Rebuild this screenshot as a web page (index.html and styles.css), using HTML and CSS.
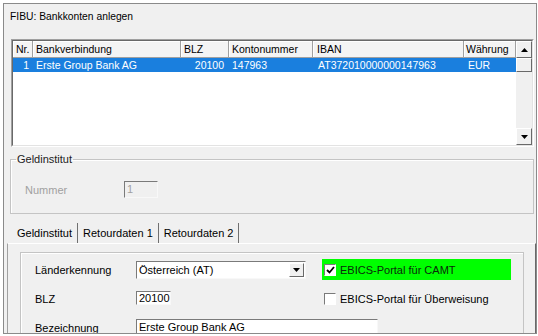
FILE: index.html
```html
<!DOCTYPE html>
<html lang="de">
<head>
    <meta charset="UTF-8">
    <meta name="viewport" content="width=device-width, initial-scale=1.0">
    <title>FIBU: Bankkonten anlegen</title>
    <link rel="stylesheet" href="styles.css">
</head>
<body>
    <div class="window">
        <div class="title">FIBU: Bankkonten anlegen</div>

        <!-- Kontenliste -->
        <div class="listview">
            <div class="list-inner">
                <div class="list-body">
                    <div class="list-row list-head">
                        <span class="col c-nr">Nr.</span>
                        <span class="col c-bank">Bankverbindung</span>
                        <span class="col c-blz">BLZ</span>
                        <span class="col c-konto">Kontonummer</span>
                        <span class="col c-iban">IBAN</span>
                        <span class="col c-wae">Währung</span>
                    </div>
                    <div class="list-row list-item selected">
                        <span class="col c-nr right">1</span>
                        <span class="col c-bank">Erste Group Bank AG</span>
                        <span class="col c-blz right">20100</span>
                        <span class="col c-konto">147963</span>
                        <span class="col c-iban">AT372010000000147963</span>
                        <span class="col c-wae">EUR</span>
                    </div>
                </div>
                <div class="scrollbar">
                    <div class="sb-btn">
                        <svg width="7" height="4" viewBox="0 0 7 4"><polygon points="0,4 7,4 3.5,0" fill="#000"/></svg>
                    </div>
                    <div class="sb-thumb"></div>
                    <div class="sb-track"></div>
                    <div class="sb-btn">
                        <svg width="7" height="4" viewBox="0 0 7 4"><polygon points="0,0 7,0 3.5,4" fill="#000"/></svg>
                    </div>
                </div>
            </div>
        </div>

        <!-- Geldinstitut -->
        <fieldset class="group">
            <legend>Geldinstitut</legend>
            <div class="group-row">
                <span class="group-label disabled">Nummer</span>
                <span class="textbox nr-box disabled">1</span>
            </div>
        </fieldset>

        <!-- Registerkarten -->
        <div class="tabs">
            <div class="tab-strip">
                <span class="tab active">Geldinstitut</span>
                <span class="tab">Retourdaten 1</span>
                <span class="tab">Retourdaten 2</span>
            </div>
            <div class="tab-page">
                <div class="panel">
                    <div class="form-row">
                        <span class="form-label">Länderkennung</span>
                        <div class="form-ctrl">
                            <div class="combo">
                                <span class="combo-text">Österreich (AT)</span>
                                <span class="combo-btn">
                                    <svg width="7" height="4" viewBox="0 0 7 4"><polygon points="0,0 7,0 3.5,4" fill="#000"/></svg>
                                </span>
                            </div>
                        </div>
                        <label class="check highlight">
                            <span class="check-box">
                                <svg width="9" height="8" viewBox="0 0 9 8"><path d="M1 4 L3.5 6.5 L8 1" stroke="#000" stroke-width="1.8" fill="none"/></svg>
                            </span>
                            <span>EBICS-Portal für CAMT</span>
                        </label>
                    </div>
                    <div class="form-row">
                        <span class="form-label">BLZ</span>
                        <div class="form-ctrl">
                            <span class="textbox blz-box">20100</span>
                        </div>
                        <label class="check">
                            <span class="check-box"></span>
                            <span>EBICS-Portal für Überweisung</span>
                        </label>
                    </div>
                    <div class="form-row">
                        <span class="form-label">Bezeichnung</span>
                        <span class="textbox name-box">Erste Group Bank AG</span>
                    </div>
                </div>
            </div>
        </div>
    </div>
</body>
</html>
```

FILE: styles.css
```css
body {
    margin: 0;
    background-color: #ffffff;
    font-family: 'Liberation Sans', Arial, sans-serif;
    font-size: 11px;
    color: #000;
}

.window {
    margin: 3px 0 0 3px;
    width: 532px;
    height: 329px;
    border: 1px solid #8a8a8a;
    background-color: #f0f0f0;
    overflow: hidden;
}

.title {
    height: 35px;
    box-sizing: border-box;
    padding: 6px 0 0 6px;
    font-size: 10.3px;
    line-height: 14px;
}

/* Liste */
.listview {
    margin-left: 7px;
    width: 523px;
    height: 108px;
    box-sizing: border-box;
    border: 1px solid;
    border-color: #a0a0a0 #ffffff #ffffff #a0a0a0;
}

.list-inner {
    height: 100%;
    box-sizing: border-box;
    border: 1px solid;
    border-color: #696969 #e3e3e3 #e3e3e3 #696969;
    background-color: #ffffff;
    display: flex;
}

.list-body {
    width: 503px;
    font-size: 10.5px;
}

.list-row {
    display: flex;
}

.list-head {
    height: 17px;
    line-height: 16px;
}

.list-head .col {
    background-color: #f4f4f4;
    border-right: 1px solid #a0a0a0;
    border-bottom: 1px solid #a0a0a0;
    box-shadow: inset 1px 1px 0 #ffffff;
}

.list-item {
    height: 14px;
    line-height: 14px;
}

.col {
    box-sizing: border-box;
    padding: 0 3px;
    white-space: nowrap;
    overflow: hidden;
}

.col.right {
    text-align: right;
}

.c-nr { width: 20px; }
.c-bank { width: 148px; }
.c-blz { width: 48px; }
.c-konto { width: 84px; }
.c-iban { width: 151px; padding-left: 4px; }
.c-wae { width: 52px; padding-left: 2px; }

.list-item .c-nr { padding-right: 4px; }
.list-item .c-blz { padding-right: 5px; }
.list-item .c-konto { padding-left: 3px; }
.list-item .c-iban { padding-left: 5px; }
.list-item .c-wae { padding-left: 4px; }

.selected {
    background-color: #1a7fde;
    color: #ffffff;
}

.scrollbar {
    width: 16px;
    display: flex;
    flex-direction: column;
    background-color: #f0f0f0;
}

.sb-btn, .sb-thumb {
    height: 17px;
    box-sizing: border-box;
    border: 1px solid;
    border-color: #ffffff #696969 #696969 #ffffff;
    background-color: #f0f0f0;
    display: flex;
    align-items: center;
    justify-content: center;
}

.sb-thumb {
    height: 14px;
}

.sb-track {
    flex: 1;
}

/* Gruppe */
.group {
    margin: 6px 0 0 6px;
    width: 524px;
    height: 61px;
    box-sizing: border-box;
    padding: 0 0 0 5px;
    border: 1px solid #c4c4c4;
    box-shadow: inset 1px 1px 0 #ffffff;
}

.group legend {
    padding: 0 1px;
    line-height: 12px;
    color: #222;
}

.group-row {
    display: flex;
    align-items: center;
    margin-top: 16px;
}

.group-label {
    width: 99px;
    padding-left: 9px;
}

.disabled {
    color: #a0a0a0;
}

.textbox {
    height: 17px;
    box-sizing: border-box;
    border: 1px solid;
    border-color: #7a7a7a #f8f8f8 #f8f8f8 #7a7a7a;
    background-color: #ffffff;
    padding-left: 2px;
    line-height: 15px;
}

.nr-box {
    width: 34px;
    background-color: #f0f0f0;
}

/* Registerkarten */
.tabs {
    margin: 9px 0 0 3px;
}

.tab-strip {
    display: flex;
    height: 20px;
    padding-left: 5px;
}

.tab {
    padding: 0 5px;
    line-height: 20px;
    border-right: 1px solid #707070;
}

.tab.active {
    color: #000;
}

.tab-page {
    height: 120px;
    border-top: 1px solid #ffffff;
    border-left: 1px solid #a0a0a0;
    border-right: 1px solid #696969;
    padding: 8px 0 0 12px;
}

.panel {
    width: 504px;
    height: 120px;
    box-sizing: border-box;
    border: 1px solid #c4c4c4;
    box-shadow: inset 1px 1px 0 #ffffff;
    padding: 2px 0 0 14px;
}

.form-row {
    display: flex;
    align-items: center;
    height: 29px;
}

.form-label {
    width: 101px;
}

.form-ctrl {
    width: 186px;
}

.combo {
    width: 170px;
    height: 18px;
    box-sizing: border-box;
    border: 1px solid;
    border-color: #7a7a7a #f8f8f8 #f8f8f8 #7a7a7a;
    background-color: #ffffff;
    display: flex;
    align-items: center;
    justify-content: space-between;
}

.combo-text {
    padding-left: 2px;
}

.combo-btn {
    width: 15px;
    height: 14px;
    margin-right: 1px;
    box-sizing: border-box;
    border: 1px solid;
    border-color: #ffffff #696969 #696969 #ffffff;
    background-color: #f0f0f0;
    display: flex;
    align-items: center;
    justify-content: center;
}

.blz-box {
    width: 57px;
}

.name-box {
    width: 242px;
}

.check {
    display: flex;
    align-items: center;
    gap: 4px;
    height: 21px;
    width: 189px;
    padding-left: 2px;
    box-sizing: border-box;
}

.check.highlight {
    background-color: #00ff00;
    color: #0b2a0b;
}

.check-box {
    width: 12px;
    height: 12px;
    box-sizing: border-box;
    border: 1px solid;
    border-color: #7a7a7a #ffffff #ffffff #7a7a7a;
    background-color: #ffffff;
    display: flex;
    align-items: center;
    justify-content: center;
}
```
